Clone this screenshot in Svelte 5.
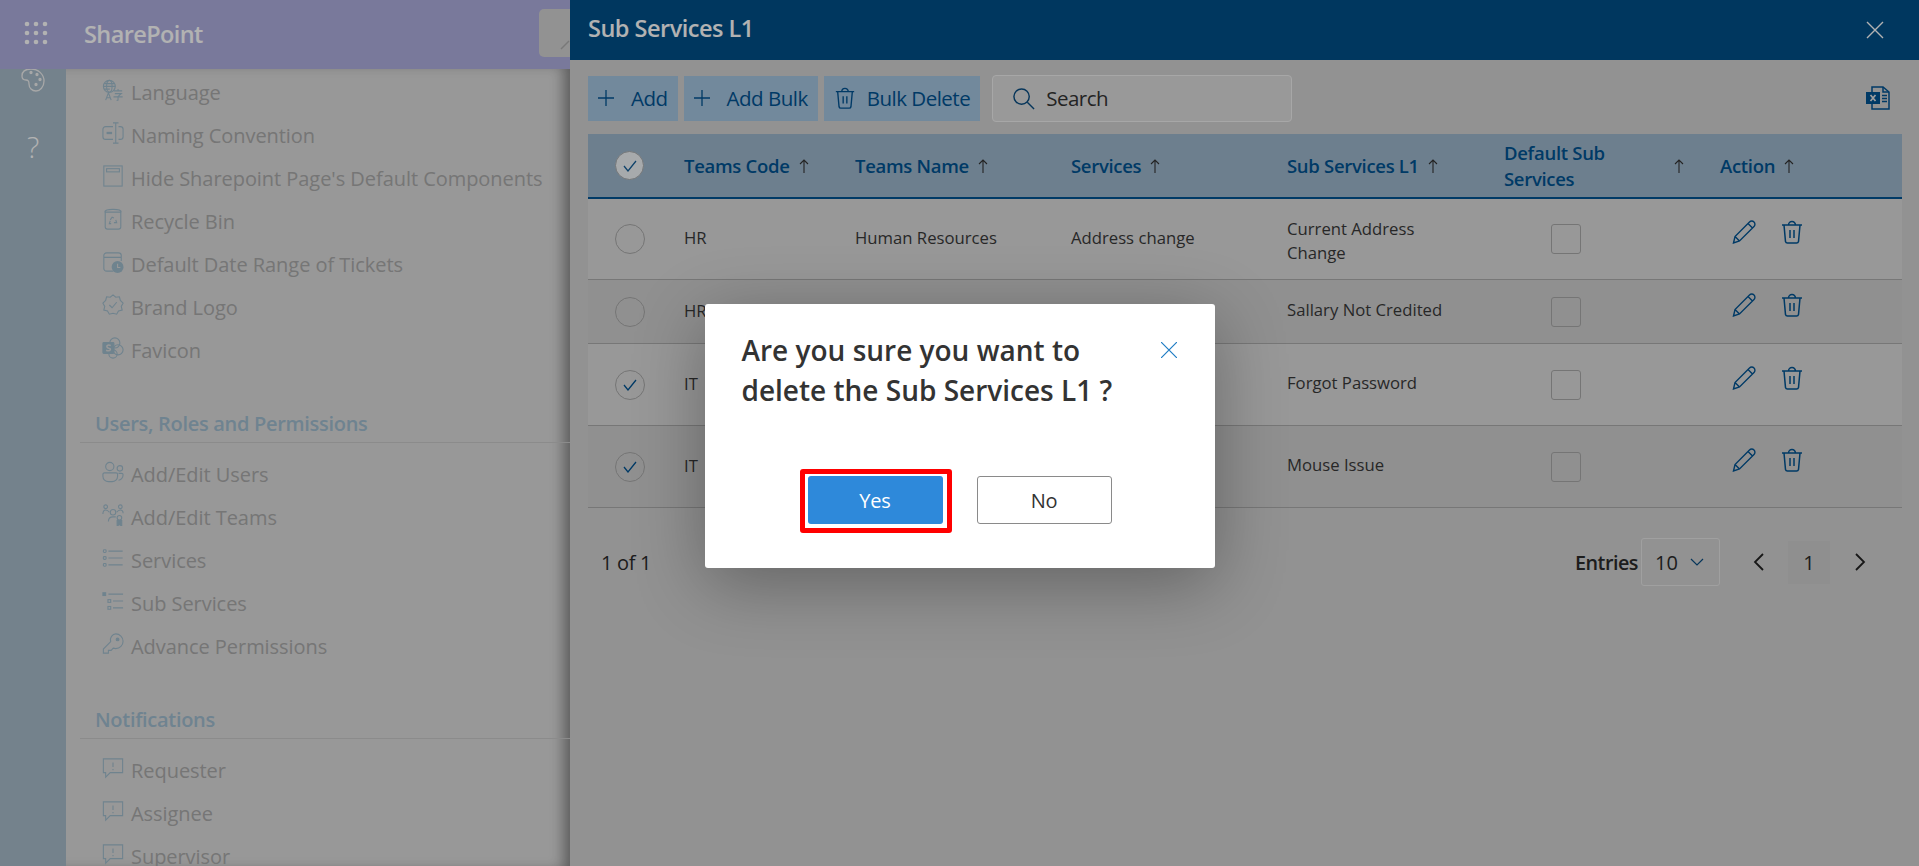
<script lang="ts">
  const icons: Record<string, string> = {
    language:
      '<circle cx="8" cy="8" r="6.5"/><ellipse cx="8" cy="8" rx="3" ry="6.5"/><path d="M1.5 8h13M2.5 5h11M2.5 11h6"/><path d="M4 23l3-8 3 8M5 20.5h4M13 13h9M17.500 11v2M14 16h7l-3 2.500M12.500 19.500h10M17.500 18.500v4.500l-1.500 .5"/>',
    naming:
      '<path d="M12 5H4a3 3 0 0 0-3 3v8a3 3 0 0 0 3 3h8M18 5h2a3 3 0 0 1 3 3v8a3 3 0 0 1-3 3h-2M12 1h6M12 23h6M15 1v22"/><path d="M5 12h6" stroke-width="2.500"/>',
    page: '<rect x="2" y="1" width="20" height="22"/><rect x="5" y="4" width="14" height="3.500"/>',
    recycle:
      '<path d="M3 4.500c0-2 3-3 9-3s9 1 9 3M3 4.500h18M3.500 4.500v16a2.500 2.500 0 0 0 2.500 2.500h12a2.500 2.500 0 0 0 2.500-2.500v-16"/><path d="M9 13l2-3 2 1M15 13l1 3h-3M10 17H8l1-3"/>',
    date:
      '<path d="M12 22H5a3 3 0 0 1-3-3V5a3 3 0 0 1 3-3h13a3 3 0 0 1 3 3v6M2 7h19"/><circle cx="17" cy="17.500" r="6.500" fill="currentColor" stroke="none"/><path d="M17 14v4h3" stroke="#dadada"/>',
    brand:
      '<path d="M12 1l3 2.500 4-.5 1 4 3 3-2 3.500 1 4-4 1-2 3.500-4-1-4 1-2-3.500-4-1 1-4-2-3.500 3-3 1-4 4 .5z"/><path d="M8 12l3 3 5-6"/>',
    favicon:
      '<circle cx="14" cy="6.500" r="5.500"/><circle cx="17.500" cy="14" r="5.500"/><circle cx="12" cy="18.500" r="4.500"/><rect x="1" y="6" width="12" height="12" rx="1" fill="currentColor"/><path d="M9.500 9.500c-2-1.500-5-.5-4 1.500s4.500 1 3.500 3-3 1-4.500.5" stroke="#dadada" stroke-width="1.600"/>',
    users:
      '<circle cx="8.500" cy="6" r="4.500"/><circle cx="19.500" cy="8" r="3"/><path d="M2.500 13h13a1.500 1.500 0 0 1 1.500 1.500v2a6 6 0 0 1-6 6H7a6 6 0 0 1-6-6v-2A1.500 1.500 0 0 1 2.500 13zM18 13.500h3.500a1.500 1.500 0 0 1 1.500 1.500c0 3.500-2.500 6-5 6"/>',
    teams:
      '<circle cx="4" cy="3" r="2"/><circle cx="20" cy="3" r="2"/><circle cx="12" cy="9" r="3"/><circle cx="19" cy="15" r="2.500"/><path d="M1 11c0-3 1-4.500 3-4.500S7 7.500 8 9M23 10c0-2.500-1-3.500-3-3.500s-3 1-4 2.500M7 19c0-3 2-5 5-5h3"/><path d="M16.500 18h5v6l-2.500-1.500-2.500 1.500z" fill="currentColor"/>',
    services:
      '<rect x="1.500" y="3" width="3" height="3" rx="1"/><rect x="1.500" y="10.500" width="3" height="3" rx="1"/><rect x="1.500" y="18" width="3" height="3" rx="1"/><path d="M7 4.500h15.500M7 12h15.500M7 19.500h15.500"/>',
    sub: '<rect x="1" y="3" width="3" height="3" fill="currentColor"/><rect x="6.500" y="10.500" width="3" height="3"/><rect x="6.500" y="18" width="3" height="3"/><path d="M7 4.500h16M12 12h11M12 19.500h11"/>',
    key: '<path d="M15 1a8 8 0 0 1 0 16c-1 0-2-.2-2.800-.5L10 19H7v3H1.500v-4.500l8-8c-1.500-4 2-8.500 5.500-8.500z"/><circle cx="17" cy="7" r="1.500" fill="currentColor"/>',
    alert:
      '<path d="M1.500 2h21v15H9l-5 5v-5H1.500z"/><path d="M12 6v5M12 13v1.500"/>',
  };

  const groups = [
    {
      title: "",
      items: [
        { icon: "language", label: "Language" },
        { icon: "naming", label: "Naming Convention" },
        { icon: "page", label: "Hide Sharepoint Page's Default Components" },
        { icon: "recycle", label: "Recycle Bin" },
        { icon: "date", label: "Default Date Range of Tickets" },
        { icon: "brand", label: "Brand Logo" },
        { icon: "favicon", label: "Favicon" },
      ],
    },
    {
      title: "Users, Roles and Permissions",
      items: [
        { icon: "users", label: "Add/Edit Users" },
        { icon: "teams", label: "Add/Edit Teams" },
        { icon: "services", label: "Services" },
        { icon: "sub", label: "Sub Services" },
        { icon: "key", label: "Advance Permissions" },
      ],
    },
    {
      title: "Notifications",
      items: [
        { icon: "alert", label: "Requester" },
        { icon: "alert", label: "Assignee" },
        { icon: "alert", label: "Supervisor" },
      ],
    },
  ];

  const columns = ["Teams Code", "Teams Name", "Services", "Sub Services L1"];

  const rows = [
    { code: "HR", team: "Human Resources", service: "Address change", sub: "Current Address Change", checked: false, h: 81 },
    { code: "HR", team: "Human Resources", service: "Salary Issue", sub: "Sallary Not Credited", checked: false, h: 64 },
    { code: "IT", team: "Information Tech", service: "Login Issue", sub: "Forgot Password", checked: true, h: 82 },
    { code: "IT", team: "Information Tech", service: "Hardware", sub: "Mouse Issue", checked: true, h: 82 },
  ];
</script>

{#snippet arrow()}
  <svg class="arrow" viewBox="0 0 10 14" width="10" height="14" fill="none" stroke="currentColor" stroke-width="1.100">
    <path d="M5 14V1M1 5l4-4 4 4" />
  </svg>
{/snippet}

{#snippet plus()}
  <svg viewBox="0 0 16 16" width="16" height="16" stroke="currentColor" stroke-width="1.300"><path d="M8 0v16M0 8h16" /></svg>
{/snippet}

{#snippet trash(size)}
  <svg viewBox="0 0 22 24" width={size} height={size} fill="none" stroke="currentColor" stroke-width="1.500">
    <path d="M1 5h20M3 5l1.500 16.500a2 2 0 0 0 2 1.500h9a2 2 0 0 0 2-1.500L19 5M7.500 5a3.500 3.500 0 0 1 7 0M9 10v8M13 10v8" />
  </svg>
{/snippet}

<div class="app">
  <header class="topbar">
    <svg class="waffle" viewBox="0 0 24 24" width="24" height="24" fill="currentColor">
      {#each [3, 12, 21] as cy}
        {#each [3, 12, 21] as cx}
          <circle {cx} {cy} r="2.300" />
        {/each}
      {/each}
    </svg>
    <span class="brand">SharePoint</span>
    <span class="searchbox">
      <svg viewBox="0 0 10 10" width="10" height="10" stroke="#aeaeae" stroke-width="1.400"><path d="M1 9l8-8" /></svg>
    </span>
  </header>

  <div class="body">
    <aside class="rail">
      <svg class="palette" viewBox="0 0 24 24" width="24" height="24" fill="none" stroke="currentColor" stroke-width="1.300">
        <path d="M10 1C4 1 1 4 1 8c0 3 2 4 4 4s3 1 3 4c0 4 3 7 7 7s8-4 8-10C23 6 17 1 10 1z" />
        <circle cx="10" cy="4.500" r="1" fill="currentColor" /><circle cx="16" cy="6.500" r="1" fill="currentColor" />
        <circle cx="19" cy="11.500" r="1" fill="currentColor" /><circle cx="15" cy="16.500" r="1" fill="currentColor" />
      </svg>
      <span class="help">?</span>
    </aside>

    <nav class="settings">
      {#each groups as group}
        <section class="group">
          {#if group.title}
            <h3>{group.title}</h3>
          {/if}
          {#each group.items as item}
            <div class="item">
              <svg class="item-icon" viewBox="0 0 24 24" width="22" height="22" fill="none" stroke="currentColor" stroke-width="1.200">
                {@html icons[item.icon]}
              </svg>
              <span>{item.label}</span>
            </div>
          {/each}
        </section>
      {/each}
    </nav>
  </div>

  <section class="panel">
    <div class="panel-head">
      <h2>Sub Services L1</h2>
      <svg viewBox="0 0 18 18" width="18" height="18" stroke="currentColor" stroke-width="1.400"><path d="M1 1l16 16M17 1L1 17" /></svg>
    </div>

    <div class="toolbar">
      <button class="tool" type="button"><span class="tool-icon">{@render plus()}</span>Add</button>
      <button class="tool" type="button"><span class="tool-icon">{@render plus()}</span>Add Bulk</button>
      <button class="tool" type="button"><span class="tool-icon">{@render trash(22)}</span>Bulk Delete</button>
      <div class="search">
        <svg viewBox="0 0 24 24" width="23" height="23" fill="none" stroke="#0a4d82" stroke-width="1.500">
          <circle cx="10" cy="10" r="8" /><path d="M16 16l7 7" />
        </svg>
        <span>Search</span>
      </div>
      <svg class="excel" viewBox="0 0 24 24" width="24" height="24" fill="none" stroke="currentColor" stroke-width="1.500">
        <path d="M6 6V1h11l6 5v17H6v-5" />
        <path d="M17 1v5h6M16 9.500h5M16 12.500h5M16 15.500h5" />
        <rect x="0" y="6" width="14" height="12" fill="currentColor" stroke="none" />
        <path d="M4.500 9l5 6M9.500 9l-5 6" stroke="#e4e4e4" stroke-width="1.700" />
      </svg>
    </div>

    <div class="table">
      <div class="row head">
        <div class="cell"><span class="circle on head-circle"><svg viewBox="0 0 14 12" width="14" height="12" fill="none" stroke="currentColor" stroke-width="1.300"><path d="M1 6l4 5 8-10" /></svg></span></div>
        {#each columns as col}
          <div class="cell"><span>{col}</span>{@render arrow()}</div>
        {/each}
        <div class="cell default-head"><span class="wrap">Default Sub Services</span>{@render arrow()}</div>
        <div class="cell"><span>Action</span>{@render arrow()}</div>
      </div>

      {#each rows as row, i}
        <div class="row" class:alt={i % 2 === 1} style="height: {row.h}px">
          <div class="cell">
            <span class="circle">
              {#if row.checked}
                <svg viewBox="0 0 14 12" width="14" height="12" fill="none" stroke="currentColor" stroke-width="1.300"><path d="M1 6l4 5 8-10" /></svg>
              {/if}
            </span>
          </div>
          <div class="cell txt">{row.code}</div>
          <div class="cell txt">{row.team}</div>
          <div class="cell txt">{row.service}</div>
          <div class="cell txt sub">{row.sub}</div>
          <div class="cell"><span class="box"></span></div>
          <div class="cell actions">
            <svg viewBox="0 0 24 24" width="24" height="24" fill="none" stroke="currentColor" stroke-width="1.400">
              <path d="M1.500 23l1.500-6.500L17.500 2a3 3 0 0 1 4.500 4.500L7.500 21zM3 16.500L7.500 21M16 3.500l4.500 4.500" />
            </svg>
            {@render trash(24)}
          </div>
        </div>
      {/each}
    </div>

    <div class="pager">
      <span class="count">1 of 1</span>
      <span class="entries">Entries</span>
      <div class="select">
        <span>10</span>
        <svg viewBox="0 0 14 8" width="14" height="8" fill="none" stroke="#0a4d82" stroke-width="1.200"><path d="M1 1l6 6 6-6" /></svg>
      </div>
      <svg class="nav-prev" viewBox="0 0 11 18" width="11" height="18" fill="none" stroke="#222" stroke-width="1.800"><path d="M10 1L2 9l8 8" /></svg>
      <span class="page">1</span>
      <svg viewBox="0 0 11 18" width="11" height="18" fill="none" stroke="#222" stroke-width="1.800"><path d="M1 1l8 8-8 8" /></svg>
    </div>
  </section>

  <div class="overlay">
    <div class="dialog">
      <div class="dialog-head">
        <p>Are you sure you want to delete the Sub Services L1 ?</p>
        <svg viewBox="0 0 16 16" width="16" height="16" stroke="#1f7cc4" stroke-width="1.200"><path d="M0 0l16 16M16 0L0 16" /></svg>
      </div>
      <div class="dialog-actions">
        <span class="mark"><button class="yes" type="button">Yes</button></span>
        <button class="no" type="button">No</button>
      </div>
    </div>
  </div>
</div>

<style>
  :global(body) {
    margin: 0;
    background: #dadada;
    font-family: "Open Sans", "Noto Sans", sans-serif;
  }

  .app {
    position: relative;
    display: flex;
    flex-direction: column;
    height: 866px;
    overflow: hidden;
  }

  .topbar {
    position: relative;
    z-index: 1;
    display: flex;
    align-items: center;
    flex-shrink: 0;
    height: 69px;
    padding-left: 24px;
    background: #aeaedf;
    color: #fff;
  }

  .waffle {
    margin-right: 36px;
    margin-top: -3px;
  }

  .brand {
    margin-top: -2px;
    font-size: 23.500px;
    font-weight: 600;
    letter-spacing: -0.6px;
  }

  .searchbox {
    position: absolute;
    left: 539px;
    top: 9px;
    display: flex;
    justify-content: flex-end;
    align-items: flex-end;
    box-sizing: border-box;
    width: 40px;
    height: 48px;
    padding: 0 9px 7px 0;
    border-radius: 5px;
    background: #d1d1d1;
  }

  .body {
    display: flex;
    flex: 1;
    min-height: 0;
  }

  .rail {
    display: flex;
    flex-direction: column;
    align-items: center;
    width: 66px;
    flex-shrink: 0;
    background: #a6bbc9;
    color: #f0f0f0;
  }

  .help {
    margin-top: 37px;
    font-size: 29px;
    line-height: 36px;
    font-weight: 300;
    color: #fff;
  }

  .palette {
    margin-top: -1px;
  }

  .settings {
    box-sizing: border-box;
    flex: 0 0 504px;
    padding: 2px 0 0 14px;
    box-shadow: inset -12px 0 14px -6px rgba(0, 0, 0, 0.4);
    overflow: hidden;
    color: #a9a9a9;
    font-size: 20px;
  }

  .group + .group {
    padding-top: 35px;
  }

  .group h3 {
    margin: 0 0 10px;
    padding: 2px 0 3px 15px;
    border-bottom: 1px solid #c8c8c8;
    color: #9fbccf;
    font-size: 20px;
    line-height: 30px;
    font-weight: 600;
    letter-spacing: -0.3px;
  }

  .item {
    display: flex;
    align-items: center;
    gap: 7px;
    height: 43px;
    padding-left: 22px;
    letter-spacing: -0.05px;
    white-space: nowrap;
  }

  .item-icon {
    flex-shrink: 0;
    margin-bottom: 6px;
    color: #a0bccc;
  }

  .panel {
    position: absolute;
    z-index: 2;
    top: 0;
    bottom: 0;
    left: 570px;
    right: 0;
    display: flex;
    flex-direction: column;
    background: #d1d1d1;
  }

  .panel-head {
    display: flex;
    align-items: center;
    justify-content: space-between;
    flex-shrink: 0;
    height: 60px;
    padding: 0 35px 0 18px;
    background: #004f89;
    color: #fff;
  }

  .panel-head h2 {
    margin: -4px 0 0;
    font-size: 23.500px;
    font-weight: 600;
    letter-spacing: -0.5px;
  }

  .toolbar {
    display: flex;
    align-items: center;
    height: 48px;
    margin: 14px 17px 12px 18px;
    gap: 6px;
  }

  .tool {
    display: flex;
    align-items: center;
    height: 45px;
    padding: 0 10px;
    border: 0;
    background: #a4c4e0;
    color: #005392;
    font-family: inherit;
    font-size: 20.500px;
    letter-spacing: -0.5px;
    white-space: nowrap;
  }

  .tool-icon {
    display: flex;
    width: 33px;
  }

  .search {
    display: flex;
    align-items: center;
    gap: 11px;
    width: 300px;
    height: 47px;
    margin-left: 6px;
    padding-left: 19px;
    box-sizing: border-box;
    border: 1px solid #f0f0f0;
    border-radius: 4px;
    background: #dcdcdc;
    color: #333;
    font-size: 20.500px;
    letter-spacing: -0.5px;
  }

  .excel {
    margin-left: auto;
    margin-right: 12px;
    color: #005392;
  }

  .table {
    margin: 0 17px 0 18px;
    color: #393939;
    font-size: 16.700px;
  }

  .row {
    display: grid;
    grid-template-columns: 96px 171px 216px 216px 217px 216px 181px;
    box-sizing: border-box;
    border-bottom: 1px solid #ababab;
    background: #dadada;
  }

  .row.alt {
    background: #cfcfcf;
  }

  .row.head {
    height: 65px;
    border-bottom: 2px solid #005392;
    background: #9db7cc;
    color: #005392;
    font-size: 18.500px;
    font-weight: 600;
    line-height: 26px;
    letter-spacing: -0.3px;
  }

  .cell {
    display: flex;
    align-items: center;
    min-width: 0;
  }

  .cell:first-child {
    justify-content: center;
    padding-right: 13px;
  }

  .txt {
    padding-bottom: 3px;
  }

  .arrow {
    flex-shrink: 0;
    margin-left: 9px;
    color: #333;
  }

  .default-head {
    justify-content: space-between;
    padding-right: 36px;
  }

  .wrap {
    width: 130px;
  }

  .circle {
    display: flex;
    align-items: center;
    justify-content: center;
    width: 28px;
    height: 28px;
    border: 1px solid #a8a8a8;
    border-radius: 50%;
    color: #005392;
  }

  .head-circle {
    width: 27px;
    height: 27px;
    background: #fff;
    opacity: 0.85;
  }

  .sub {
    line-height: 24px;
    padding-right: 35px;
  }

  /* the only cell that wraps sits a little lower */
  .row:nth-child(2) .sub {
    padding: 3px 35px 0 0;
  }

  .box {
    width: 28px;
    height: 28px;
    margin-left: 47px;
    border: 1px solid #a8a8a8;
    border-radius: 3px;
  }

  .actions {
    gap: 24px;
    padding: 0 0 14px 12px;
    color: #005392;
  }

  .pager {
    display: flex;
    align-items: center;
    height: 48px;
    margin: 30px 17px 0 18px;
    padding-left: 13px;
    color: #2a2a2a;
    font-size: 20px;
  }

  .count {
    margin-right: auto;
    letter-spacing: -0.3px;
  }

  .entries {
    font-size: 19.800px;
    font-weight: 600;
    letter-spacing: -0.5px;
    margin-right: 3px;
  }

  .select {
    display: flex;
    align-items: center;
    justify-content: space-between;
    box-sizing: border-box;
    width: 79px;
    height: 48px;
    padding: 0 15px 0 13px;
    border: 1px solid #e6e6e6;
    border-radius: 3px;
    font-size: 20px;
  }

  .nav-prev {
    margin-left: 33px;
  }

  .page {
    display: flex;
    align-items: center;
    justify-content: center;
    width: 42px;
    height: 43px;
    margin: 0 25px 0 24px;
    background: #cdcdcd;
    font-size: 20px;
  }

  .pager > svg:last-child {
    margin-right: 36px;
  }

  .overlay {
    position: absolute;
    z-index: 3;
    inset: 0;
    display: flex;
    align-items: center;
    justify-content: center;
    background: rgba(0, 0, 0, 0.3);
  }

  .dialog {
    box-sizing: border-box;
    width: 510px;
    height: 264px;
    margin-top: 6px;
    padding: 26px 38px 0 37px;
    border-radius: 3px;
    background: #fff;
    box-shadow: 0 16px 70px rgba(0, 0, 0, 0.32);
  }

  .dialog-head {
    display: flex;
    justify-content: space-between;
    align-items: flex-start;
    height: 80px;
  }

  .dialog-head p {
    width: 385px;
    margin: 0;
    color: #333;
    font-size: 28px;
    line-height: 40px;
    font-weight: 600;
  }

  .dialog-head svg {
    margin-top: 12px;
  }

  .dialog-actions {
    display: flex;
    justify-content: center;
    gap: 34px;
    margin: 66px 0 0 1px;
  }

  .mark {
    display: block;
    margin: -7px -9px -9px -8px;
    padding: 2px 4px 4px 3px;
    border: 5px solid #ff0000;
    border-radius: 3px;
  }

  .dialog-actions button {
    display: block;
    box-sizing: border-box;
    width: 135px;
    height: 48px;
    border-radius: 3px;
    font-family: inherit;
    font-size: 20px;
    letter-spacing: -0.2px;
  }

  .yes {
    border: 0;
    background: #2e89da;
    color: #fff;
  }

  .no {
    border: 1px solid #8a8a8a;
    background: #fff;
    color: #333;
  }
</style>
